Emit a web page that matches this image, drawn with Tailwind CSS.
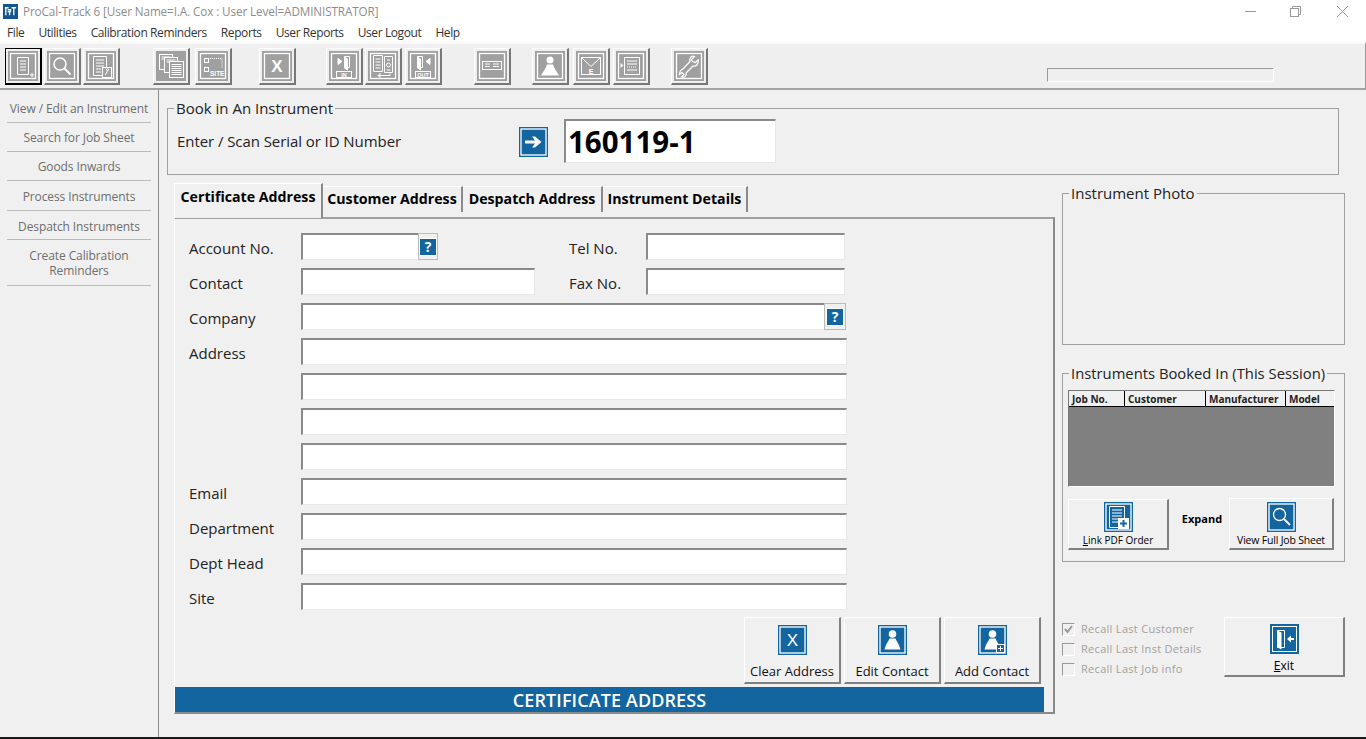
<!DOCTYPE html>
<html lang="en">
<head>
<meta charset="UTF-8">
<title>ProCal-Track 6</title>
<script src="https://cdn.jsdelivr.net/npm/@tailwindcss/browser@4"></script>
</head>
<body class="bg-[#f0f0f0]">
<div class="w-[1366px] h-[739px] overflow-hidden flex flex-col font-['Open_Sans','Noto_Sans',sans-serif] text-black border-b-2 border-[#1a1a1a]">

  <!-- title bar -->
  <div class="h-[22px] shrink-0 bg-white flex items-center pl-[3px] pt-[1px]">
    <svg width="15" height="15" viewBox="0 0 16 16"><rect width="16" height="16" fill="#13558f"/><path d="M2 4h4M3 4v8M5 6h3v2H5M7 8v4M9 4h5M11.500 4v8" stroke="#fff" stroke-width="1.400" fill="none"/></svg>
    <span class="ml-[5px] pt-[1px] text-[11.700px] text-[#8c8c8c] tracking-[-0.1px]">ProCal-Track 6 [User Name=I.A. Cox : User Level=ADMINISTRATOR]</span>
    <div class="ml-auto flex items-center gap-[34px] mr-[17px]">
      <svg width="11" height="11" viewBox="0 0 11 11"><path d="M0 5.500h11" stroke="#999"/></svg>
      <svg width="11" height="11" viewBox="0 0 11 11" fill="none" stroke="#999"><path d="M2.500 2.500V.5h8v8h-2"/><rect x=".5" y="2.500" width="8" height="8"/></svg>
      <svg class="ml-[1px]" width="13" height="13" viewBox="0 0 13 13"><path d="M1 1l11 11M12 1L1 12" stroke="#999"/></svg>
    </div>
  </div>

  <!-- menu -->
  <div class="h-[20px] shrink-0 bg-white flex items-center text-[12px] tracking-[-0.4px] text-[#333] pl-[7px] gap-[14px] pt-[2px]">
    <span>File</span><span>Utilities</span><span>Calibration Reminders</span><span>Reports</span><span>User Reports</span><span>User Logout</span><span>Help</span>
  </div>

  <!-- toolbar -->
  <div class="h-[48px] shrink-0 bg-[#efefef] border-t-2 border-t-[#f9f9f9] border-b-2 border-b-[#a3a3a3] border-r border-r-[#999] flex items-start pt-[4px]">
    <div class="ml-[5px] w-[37px] h-[37px] flex items-center justify-center border border-black border-b-2 border-r-2 bg-[#efefef]">
      <svg width="30" height="30" viewBox="0 0 30 30" fill="none" stroke="#fff"><rect width="30" height="30" fill="#a0a0a0" stroke="none"/><rect x="2.500" y="2.500" width="25" height="25" stroke-width="1.300"/><path d="M9.500 6.500h11v17h-11zM12 10h6M12 13h6M12 16h6M12 19h6"/><path d="M24 22v4M22 24h4"/></svg>
    </div>
    <div class="ml-[2px] w-[37px] h-[37px] flex items-center justify-center border-t border-l border-t-white border-l-white border-r-2 border-b-2 border-r-[#777] border-b-[#777]">
      <svg width="30" height="30" viewBox="0 0 30 30" fill="none" stroke="#fff"><rect width="30" height="30" fill="#a0a0a0" stroke="none"/><rect x="2.500" y="2.500" width="25" height="25" stroke-width="1.300"/><circle cx="13" cy="13" r="6" stroke-width="1.500"/><path d="M17.500 17.500l6 6" stroke-width="2"/></svg>
    </div>
    <div class="ml-[2px] w-[37px] h-[37px] flex items-center justify-center border-t border-l border-t-white border-l-white border-r-2 border-b-2 border-r-[#777] border-b-[#777]">
      <svg width="30" height="30" viewBox="0 0 30 30" fill="none" stroke="#fff"><rect width="30" height="30" fill="#a0a0a0" stroke="none"/><rect x="2.500" y="2.500" width="25" height="25" stroke-width="1.300"/><path d="M7.500 5.500h13v19h-13zM10 9h8M10 12h8M10 15h8M10 18h5M10 21h5"/><rect x="16.500" y="16.500" width="9" height="10" fill="#a0a0a0"/><path d="M21.500 19.500a1 1 0 1 1 .1 0L19.500 24"/></svg>
    </div>
    <div class="ml-[33px] w-[37px] h-[37px] flex items-center justify-center border-t border-l border-t-white border-l-white border-r-2 border-b-2 border-r-[#777] border-b-[#777]">
      <svg width="30" height="30" viewBox="0 0 30 30" fill="none" stroke="#fff"><rect width="30" height="30" fill="#a0a0a0" stroke="none"/><rect x="3.500" y="3.500" width="13" height="15" fill="#a0a0a0"/><path d="M5.500 6h9M5.500 8h9"/><rect x="8.500" y="6.500" width="13" height="15" fill="#a0a0a0"/><path d="M10.500 9h9M10.500 11h9"/><rect x="13.500" y="10.500" width="14" height="16" fill="#a0a0a0"/><path d="M15.500 13.500h10M15.500 15.500h10M15.500 17.500h10M15.500 19.500h10M15.500 21.500h10M15.500 23.500h10"/></svg>
    </div>
    <div class="ml-[5px] w-[37px] h-[37px] flex items-center justify-center border-t border-l border-t-white border-l-white border-r-2 border-b-2 border-r-[#777] border-b-[#777]">
      <svg width="30" height="30" viewBox="0 0 30 30" fill="none" stroke="#fff"><rect width="30" height="30" fill="#a0a0a0" stroke="none"/><rect x="2.500" y="2.500" width="25" height="25" stroke-width="1.300"/><rect x="6.500" y="7.500" width="4" height="4"/><rect x="6.500" y="16.500" width="4" height="4"/><path d="M12 7.500h12v10" stroke-dasharray="1 1"/><text x="12" y="25" fill="#fff" stroke="none" font-size="6.500" font-weight="700" font-family="Liberation Sans">SITE</text></svg>
    </div>
    <div class="ml-[27px] w-[37px] h-[37px] flex items-center justify-center border-t border-l border-t-white border-l-white border-r-2 border-b-2 border-r-[#777] border-b-[#777]">
      <svg width="30" height="30" viewBox="0 0 30 30" fill="none" stroke="#fff"><rect width="30" height="30" fill="#a0a0a0" stroke="none"/><rect x="2.500" y="2.500" width="25" height="25" stroke-width="1.300"/><text x="15" y="21" text-anchor="middle" fill="#fff" stroke="none" font-size="17" font-weight="700" font-family="Liberation Sans">X</text></svg>
    </div>
    <div class="ml-[30px] w-[37px] h-[37px] flex items-center justify-center border-t border-l border-t-white border-l-white border-r-2 border-b-2 border-r-[#777] border-b-[#777]">
      <svg width="30" height="30" viewBox="0 0 30 30" fill="none" stroke="#fff"><rect width="30" height="30" fill="#a0a0a0" stroke="none"/><rect x="2.500" y="2.500" width="25" height="25" stroke-width="1.300"/><path d="M15.500 5.500h5v11h-5z"/><path d="M15.500 6l3 2v11l-3-2z" fill="#fff"/><path d="M9 7.500l4 3-4 3z" fill="#fff"/><rect x="7.500" y="20.500" width="15" height="6" fill="#a0a0a0"/><text x="15" y="25.500" text-anchor="middle" fill="#fff" stroke="none" font-size="5.500" font-weight="700" font-family="Liberation Sans">IN</text></svg>
    </div>
    <div class="ml-[2px] w-[37px] h-[37px] flex items-center justify-center border-t border-l border-t-white border-l-white border-r-2 border-b-2 border-r-[#777] border-b-[#777]">
      <svg width="30" height="30" viewBox="0 0 30 30" fill="none" stroke="#fff"><rect width="30" height="30" fill="#a0a0a0" stroke="none"/><rect x="2.500" y="2.500" width="25" height="25" stroke-width="1.300"/><path d="M5.500 4.500h9v16h-9zM7.500 8h5M7.500 11h5M7.500 14h5M7.500 17h5"/><path d="M16.500 5.500h8v16h-8zM19 9h3M18.500 19h4"/><circle cx="20.500" cy="14" r="2"/><path d="M10 24.500h12v-2M10 24.500l2-2v4z"/></svg>
    </div>
    <div class="ml-[3px] w-[37px] h-[37px] flex items-center justify-center border-t border-l border-t-white border-l-white border-r-2 border-b-2 border-r-[#777] border-b-[#777]">
      <svg width="30" height="30" viewBox="0 0 30 30" fill="none" stroke="#fff"><rect width="30" height="30" fill="#a0a0a0" stroke="none"/><rect x="2.500" y="2.500" width="25" height="25" stroke-width="1.300"/><path d="M9.500 5.500h5v11h-5z"/><path d="M9.500 6l3 2v11l-3-2z" fill="#fff"/><path d="M22 7.500l-4 3 4 3z" fill="#fff"/><rect x="7.500" y="20.500" width="15" height="6" fill="#a0a0a0"/><text x="15" y="25.500" text-anchor="middle" fill="#fff" stroke="none" font-size="5.500" font-weight="700" font-family="Liberation Sans">OUT</text></svg>
    </div>
    <div class="ml-[32px] w-[37px] h-[37px] flex items-center justify-center border-t border-l border-t-white border-l-white border-r-2 border-b-2 border-r-[#777] border-b-[#777]">
      <svg width="30" height="30" viewBox="0 0 30 30" fill="none" stroke="#fff"><rect width="30" height="30" fill="#a0a0a0" stroke="none"/><rect x="2.500" y="2.500" width="25" height="25" stroke-width="1.300"/><rect x="5.500" y="10.500" width="19" height="8"/><path d="M8 13h5M8 15.500h5M16 13h6M16 15.500h6"/></svg>
    </div>
    <div class="ml-[21px] w-[37px] h-[37px] flex items-center justify-center border-t border-l border-t-white border-l-white border-r-2 border-b-2 border-r-[#777] border-b-[#777]">
      <svg width="30" height="30" viewBox="0 0 30 30" fill="none" stroke="#fff"><rect width="30" height="30" fill="#a0a0a0" stroke="none"/><rect x="2.500" y="2.500" width="25" height="25" stroke-width="1.300"/><circle cx="15" cy="9" r="3.500" fill="#fff" stroke="none"/><path d="M12 13.500h6c1 4 4 7 6 11H6c2-4 5-7 6-11z" fill="#fff" stroke="none"/></svg>
    </div>
    <div class="ml-[4px] w-[37px] h-[37px] flex items-center justify-center border-t border-l border-t-white border-l-white border-r-2 border-b-2 border-r-[#777] border-b-[#777]">
      <svg width="30" height="30" viewBox="0 0 30 30" fill="none" stroke="#fff"><rect width="30" height="30" fill="#a0a0a0" stroke="none"/><rect x="2.500" y="2.500" width="25" height="25" stroke-width="1.300"/><rect x="5.500" y="6.500" width="19" height="17"/><path d="M5.500 6.500l9.500 9 9.500-9"/><text x="15" y="23" text-anchor="middle" fill="#fff" stroke="none" font-size="7" font-weight="700" font-family="Liberation Sans">E</text></svg>
    </div>
    <div class="ml-[3px] w-[37px] h-[37px] flex items-center justify-center border-t border-l border-t-white border-l-white border-r-2 border-b-2 border-r-[#777] border-b-[#777]">
      <svg width="30" height="30" viewBox="0 0 30 30" fill="none" stroke="#fff"><rect width="30" height="30" fill="#a0a0a0" stroke="none"/><rect x="2.500" y="2.500" width="25" height="25" stroke-width="1.300"/><rect x="8.500" y="6.500" width="15" height="17"/><path d="M11 10h10M11 13h10"/><path d="M11 16h10" stroke-dasharray="1 1"/><path d="M11 19h10"/><path d="M4.500 12l3 2.500-3 2.500z" fill="#fff" stroke="none"/></svg>
    </div>
    <div class="ml-[21px] w-[37px] h-[37px] flex items-center justify-center border-t border-l border-t-white border-l-white border-r-2 border-b-2 border-r-[#777] border-b-[#777]">
      <svg width="30" height="30" viewBox="0 0 30 30" fill="none" stroke="#fff"><rect width="30" height="30" fill="#a0a0a0" stroke="none"/><rect x="2.500" y="2.500" width="25" height="25" stroke-width="1.300"/><path d="M24.500 8.500l-3 3-3-1-1-2 3-3c-3-1-5.500 1-4.500 5L9 18c-3 1-3.500 3.500-3.500 5.500l2.500-2 2 2-2.500 2.500c3.500 1 5.500-2 4.500-4l7-7c3 1 6-2 5.500-7z" stroke-width="1.200"/></svg>
    </div>
    <div class="ml-[339px] mt-[20px] w-[227px] h-[14px] border-t border-l border-t-[#999] border-l-[#999] border-r border-b border-r-white border-b-white"></div>
  </div>

  <div class="flex-1 flex min-h-0">
    <!-- sidebar -->
    <div class="w-[159px] shrink-0 border-r border-[#8e8e8e] pl-[7px] pr-[7px] text-[12px] tracking-[-0.1px] text-[#6e6e6e] text-center">
      <div class="h-[33px] flex items-center justify-center border-b border-[#bbb] pt-[6px]">View / Edit an Instrument</div>
      <div class="h-[29px] flex items-center justify-center border-b border-[#bbb] pt-[2px]">Search for Job Sheet</div>
      <div class="h-[29px] flex items-center justify-center border-b border-[#bbb] pt-[2px]">Goods Inwards</div>
      <div class="h-[30px] flex items-center justify-center border-b border-[#bbb] pt-[3px]">Process Instruments</div>
      <div class="h-[29px] flex items-center justify-center border-b border-[#bbb] pt-[3px]">Despatch Instruments</div>
      <div class="h-[46px] flex items-center justify-center border-b border-[#bbb] leading-[15px] px-[10px]">Create Calibration Reminders</div>
    </div>

    <!-- main -->
    <div class="flex-1 min-w-0 pl-[8px] pt-[8px]">
      <fieldset class="w-[1172px] h-[77px] border border-[#a0a0a0] pl-[9px] flex">
        <legend class="-ml-[3px] px-[2px] text-[15px] leading-[20px] text-[#222]">Book in An Instrument</legend>
        <div class="flex items-start w-full">
          <span class="w-[342px] mt-[13px] text-[15px] leading-[20px] tracking-[-0.07px] text-[#222]">Enter / Scan Serial or ID Number</span>
          <div class="mt-[9px] w-[29px] h-[30px] bg-[#13659f] flex items-center justify-center">
            <svg width="29" height="30" viewBox="0 0 29 30" fill="none" stroke="#fff"><rect x="2" y="2" width="25" height="26" stroke-width="1.300"/><path d="M6 13.500h10l-3-4h3l6.500 5.500-6.500 5.500h-3l3-4H6z" fill="#fff" stroke="none"/></svg>
          </div>
          <div class="ml-[16px] w-[212px] h-[44px] mt-[1px] bg-white border-t-2 border-l-2 border-t-[#8a8a8a] border-l-[#8a8a8a] border-r border-b border-r-[#e8e8e8] border-b-[#e8e8e8] flex items-center pl-[2px] text-[29.500px] font-bold leading-none">160119-1</div>
        </div>
      </fieldset>

      <div class="flex mt-[8px]">
        <!-- tab block -->
        <div class="ml-[7px] w-[881px] shrink-0">
          <div class="flex items-start h-[35px] text-[14.200px] relative z-10">
            <div class="w-[149px] h-[35px] bg-[#f0f0f0] border-t border-l border-t-white border-l-white border-r-2 border-r-[#8a8a8a] flex items-start justify-center pt-[3px] leading-[20px] font-bold">Certificate Address</div>
            <div class="mt-[3px] w-[140px] h-[26px] border-r-2 border-r-[#8a8a8a] border-t border-t-white flex items-center justify-center font-bold pb-[2px]">Customer Address</div>
            <div class="mt-[3px] w-[140px] h-[26px] border-r-2 border-r-[#8a8a8a] border-t border-t-white flex items-center justify-center font-bold pb-[2px]">Despatch Address</div>
            <div class="mt-[3px] w-[145px] h-[26px] border-r-2 border-r-[#8a8a8a] border-t border-t-white flex items-center justify-center font-bold pb-[2px]">Instrument Details</div>
          </div>
          <div class="h-[497px] -mt-[1px] border-t-2 border-t-[#a0a0a0] border-l border-l-white border-r-2 border-r-[#8a8a8a] border-b-2 border-b-[#8a8a8a] flex flex-col pt-[14px]">
            <div class="pl-[14px] flex flex-col gap-[8px] text-[15px] text-[#222]">
              <div class="flex items-center h-[27px]">
                <span class="w-[112px] pt-[4px]">Account No.</span>
                <div class="w-[117px] h-[27px] bg-white border-t-2 border-l-2 border-t-[#8a8a8a] border-l-[#8a8a8a] border-b border-b-[#e8e8e8]"></div>
                <div class="w-[20px] h-[27px] border border-[#bbb] flex items-center justify-center"><div class="w-[18px] h-[18px] bg-[#13659f] border border-white text-white font-bold text-[14px] leading-none flex items-center justify-center">?</div></div>
                <span class="ml-[131px] w-[77px] pt-[4px]">Tel No.</span>
                <div class="w-[199px] h-[27px] bg-white border-t-2 border-l-2 border-t-[#8a8a8a] border-l-[#8a8a8a] border-r border-b border-r-[#e8e8e8] border-b-[#e8e8e8]"></div>
              </div>
              <div class="flex items-center h-[27px]">
                <span class="w-[112px] pt-[4px]">Contact</span>
                <div class="w-[234px] h-[27px] bg-white border-t-2 border-l-2 border-t-[#8a8a8a] border-l-[#8a8a8a] border-r border-b border-r-[#e8e8e8] border-b-[#e8e8e8]"></div>
                <span class="ml-[34px] w-[77px] pt-[4px]">Fax No.</span>
                <div class="w-[199px] h-[27px] bg-white border-t-2 border-l-2 border-t-[#8a8a8a] border-l-[#8a8a8a] border-r border-b border-r-[#e8e8e8] border-b-[#e8e8e8]"></div>
              </div>
              <div class="flex items-center h-[27px]">
                <span class="w-[112px] pt-[4px]">Company</span>
                <div class="w-[523px] h-[27px] bg-white border-t-2 border-l-2 border-t-[#8a8a8a] border-l-[#8a8a8a] border-b border-b-[#e8e8e8]"></div>
                <div class="w-[22px] h-[27px] border border-[#bbb] flex items-center justify-center"><div class="w-[18px] h-[18px] bg-[#13659f] border border-white text-white font-bold text-[14px] leading-none flex items-center justify-center">?</div></div>
              </div>
              <div class="flex items-center h-[27px]">
                <span class="w-[112px] pt-[4px]">Address</span>
                <div class="w-[546px] h-[27px] bg-white border-t-2 border-l-2 border-t-[#8a8a8a] border-l-[#8a8a8a] border-r border-b border-r-[#e8e8e8] border-b-[#e8e8e8]"></div>
              </div>
              <div class="flex items-center h-[27px]">
                <span class="w-[112px]"></span>
                <div class="w-[546px] h-[27px] bg-white border-t-2 border-l-2 border-t-[#8a8a8a] border-l-[#8a8a8a] border-r border-b border-r-[#e8e8e8] border-b-[#e8e8e8]"></div>
              </div>
              <div class="flex items-center h-[27px]">
                <span class="w-[112px]"></span>
                <div class="w-[546px] h-[27px] bg-white border-t-2 border-l-2 border-t-[#8a8a8a] border-l-[#8a8a8a] border-r border-b border-r-[#e8e8e8] border-b-[#e8e8e8]"></div>
              </div>
              <div class="flex items-center h-[27px]">
                <span class="w-[112px]"></span>
                <div class="w-[546px] h-[27px] bg-white border-t-2 border-l-2 border-t-[#8a8a8a] border-l-[#8a8a8a] border-r border-b border-r-[#e8e8e8] border-b-[#e8e8e8]"></div>
              </div>
              <div class="flex items-center h-[27px]">
                <span class="w-[112px] pt-[4px]">Email</span>
                <div class="w-[546px] h-[27px] bg-white border-t-2 border-l-2 border-t-[#8a8a8a] border-l-[#8a8a8a] border-r border-b border-r-[#e8e8e8] border-b-[#e8e8e8]"></div>
              </div>
              <div class="flex items-center h-[27px]">
                <span class="w-[112px] pt-[4px]">Department</span>
                <div class="w-[546px] h-[27px] bg-white border-t-2 border-l-2 border-t-[#8a8a8a] border-l-[#8a8a8a] border-r border-b border-r-[#e8e8e8] border-b-[#e8e8e8]"></div>
              </div>
              <div class="flex items-center h-[27px]">
                <span class="w-[112px] pt-[4px]">Dept Head</span>
                <div class="w-[546px] h-[27px] bg-white border-t-2 border-l-2 border-t-[#8a8a8a] border-l-[#8a8a8a] border-r border-b border-r-[#e8e8e8] border-b-[#e8e8e8]"></div>
              </div>
              <div class="flex items-center h-[27px]">
                <span class="w-[112px] pt-[4px]">Site</span>
                <div class="w-[546px] h-[27px] bg-white border-t-2 border-l-2 border-t-[#8a8a8a] border-l-[#8a8a8a] border-r border-b border-r-[#e8e8e8] border-b-[#e8e8e8]"></div>
              </div>
            </div>
            <!-- address buttons -->
            <div class="mt-[7px] flex justify-end gap-[3px] pr-[12px] text-[13px] text-[#111]">
              <div class="w-[97px] h-[67px] border-t border-l border-t-white border-l-white border-r-2 border-b-2 border-r-[#808080] border-b-[#808080] flex flex-col items-center pt-[7px]">
                <svg width="29" height="30" viewBox="0 0 29 30" fill="none" stroke="#fff"><rect width="29" height="30" fill="#13659f" stroke="none"/><rect x="2" y="2" width="25" height="26" stroke-width="1.300"/><text x="14.500" y="21" text-anchor="middle" fill="#fff" stroke="none" font-size="17" font-family="Liberation Sans">X</text></svg>
                <span class="mt-[7px] leading-[18px]">Clear Address</span>
              </div>
              <div class="w-[97px] h-[67px] border-t border-l border-t-white border-l-white border-r-2 border-b-2 border-r-[#808080] border-b-[#808080] flex flex-col items-center pt-[7px]">
                <svg width="29" height="30" viewBox="0 0 29 30" fill="none" stroke="#fff"><rect width="29" height="30" fill="#13659f" stroke="none"/><rect x="2" y="2" width="25" height="26" stroke-width="1.300"/><circle cx="14.500" cy="9" r="3.800" fill="#fff" stroke="none"/><path d="M11.500 13.500h6c1 3 3 4 5 11H6.500c2-7 4-8 5-11z" fill="#fff" stroke="none"/></svg>
                <span class="mt-[7px] leading-[18px]">Edit Contact</span>
              </div>
              <div class="w-[97px] h-[67px] border-t border-l border-t-white border-l-white border-r-2 border-b-2 border-r-[#808080] border-b-[#808080] flex flex-col items-center pt-[7px]">
                <svg width="29" height="30" viewBox="0 0 29 30" fill="none" stroke="#fff"><rect width="29" height="30" fill="#13659f" stroke="none"/><rect x="2" y="2" width="25" height="26" stroke-width="1.300"/><circle cx="14.500" cy="9" r="3.800" fill="#fff" stroke="none"/><path d="M11.500 13.500h6c1 3 3 4 5 11H6.500c2-7 4-8 5-11z" fill="#fff" stroke="none"/><rect x="18.500" y="19.500" width="8" height="8" fill="#13659f"/><path d="M22.500 21v5M20 23.500h5"/></svg>
                <span class="mt-[7px] leading-[18px]">Add Contact</span>
              </div>
            </div>
            <div class="mt-auto w-[869px] h-[25px] bg-[#13659f] text-white text-[18px] tracking-[0.1px] font-semibold flex items-center justify-center pt-[2px]">CERTIFICATE ADDRESS</div>
          </div>
        </div>

        <!-- right column -->
        <div class="ml-[7px] w-[283px] shrink-0">
          <fieldset class="w-[283px] h-[162px] border border-[#a0a0a0]">
            <legend class="ml-[6px] px-[2px] text-[15px] leading-[20px] text-[#222]">Instrument Photo</legend>
          </fieldset>
          <fieldset class="w-[283px] h-[199px] mt-[18px] border border-[#a0a0a0] pl-[5px]">
            <legend class="ml-[1px] px-[2px] text-[14.800px] leading-[20px] text-[#222]">Instruments Booked In (This Session)</legend>
            <div class="w-[267px] h-[97px] mt-[7px] border border-[#777] border-r-white border-b-white bg-[#808080]">
              <div class="flex h-[16px] bg-[#f0f0f0] border-b border-black text-[10px] font-bold leading-[16px] text-[#222]">
                <span class="w-[56px] pl-[3px] border-r border-black">Job No.</span>
                <span class="w-[81px] pl-[3px] border-r border-black">Customer</span>
                <span class="w-[80px] pl-[3px] border-r border-black">Manufacturer</span>
                <span class="pl-[3px]">Model</span>
              </div>
            </div>
            <div class="flex mt-[12px] text-[10.500px]">
              <div class="w-[101px] h-[51px] border-t border-l border-t-white border-l-white border-r-2 border-b-2 border-r-[#808080] border-b-[#808080] flex flex-col items-center">
                <svg class="mt-[2px]" width="29" height="30" viewBox="0 0 29 30" fill="none" stroke="#fff"><rect width="29" height="30" fill="#13659f" stroke="none"/><rect x="2" y="2" width="25" height="26" stroke-width="1.300"/><path d="M5.500 4.500h15v21h-15zM8 8h10M8 11h10M8 14h10M8 17h6M8 20h6"/><rect x="14" y="16" width="11" height="11" fill="#fff" stroke="none"/><path d="M19.500 18v7M16 21.500h7" stroke="#13659f" stroke-width="2"/></svg>
                <span class="mt-[1px] leading-[14px] text-[10px]"><span class="underline">L</span>ink PDF Order</span>
              </div>
              <div class="w-[60px] h-[51px] flex items-center justify-center text-[11px] font-bold pb-[10px] pl-[6px]">Expand</div>
              <div class="w-[105px] h-[52px] -mt-[1px] border-t border-l border-t-white border-l-white border-r-2 border-b-2 border-r-[#808080] border-b-[#808080] flex flex-col items-center">
                <svg class="mt-[3px]" width="29" height="30" viewBox="0 0 29 30" fill="none" stroke="#fff"><rect width="29" height="30" fill="#13659f" stroke="none"/><rect x="2" y="2" width="25" height="26" stroke-width="1.300"/><circle cx="12.500" cy="12.500" r="6" stroke-width="1.300"/><path d="M17 17l6 6" stroke-width="1.800"/></svg>
                <span class="mt-[1px] leading-[14px] tracking-[-0.2px]">View Full Job Sheet</span>
              </div>
            </div>
          </fieldset>
          <div class="flex mt-[55px]">
            <div class="w-[162px] flex flex-col gap-[7px] pt-[6px] text-[11px] text-[#a0a0a0] tracking-[0.3px]">
              <div class="flex items-center h-[13px] gap-[6px]">
                <div class="w-[13px] h-[13px] border border-[#999] border-r-white border-b-white flex items-center justify-center"><svg width="11" height="11" viewBox="0 0 11 11" fill="none"><path d="M2 5l2.500 3L9 2" stroke="#999" stroke-width="2"/></svg></div>
                <span>Recall Last Customer</span>
              </div>
              <div class="flex items-center h-[13px] gap-[6px]">
                <div class="w-[13px] h-[13px] border border-[#999] border-r-white border-b-white"></div>
                <span>Recall Last Inst Details</span>
              </div>
              <div class="flex items-center h-[13px] gap-[6px]">
                <div class="w-[13px] h-[13px] border border-[#999] border-r-white border-b-white"></div>
                <span>Recall Last Job info</span>
              </div>
            </div>
            <div class="w-[121px] h-[60px] border-t border-l border-t-white border-l-white border-r-2 border-b-2 border-r-[#808080] border-b-[#808080] flex flex-col items-center pt-[6px] text-[12px]">
              <svg width="29" height="30" viewBox="0 0 29 30" fill="none" stroke="#fff"><rect width="29" height="30" fill="#13659f" stroke="none"/><rect x="2.500" y="2.500" width="24" height="25"/><path d="M7.500 6.500h7v17h-7z"/><path d="M7.500 6.500l4 2v17l-4-2z" fill="#fff" stroke="none"/><path d="M24 15h-4" stroke-width="2"/><path d="M21 11.500l-4 3.500 4 3.500z" fill="#fff" stroke="none"/></svg>
              <span class="mt-[4px] leading-[16px]"><span class="underline">E</span>xit</span>
            </div>
          </div>
        </div>
      </div>
    </div>
  </div>
</div>
</body>
</html>
